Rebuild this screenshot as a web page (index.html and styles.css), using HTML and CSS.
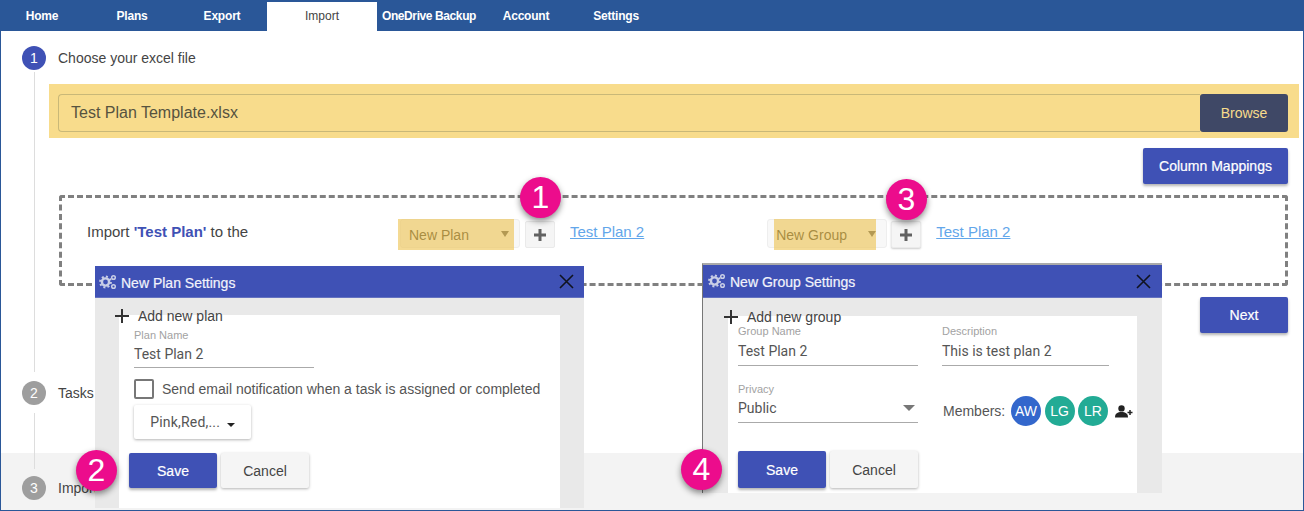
FILE: index.html
```html
<!DOCTYPE html>
<html lang="en">
<head>
	<meta charset="utf-8">
	<title>Import</title>
	<link rel="stylesheet" href="styles.css">
</head>
<body>
<div class="page">
	<nav class="nav">
		<a class="tab">Home</a>
		<a class="tab">Plans</a>
		<a class="tab">Export</a>
		<a class="tab tab-active">Import</a>
		<a class="tab tab-wide">OneDrive Backup</a>
		<a class="tab">Account</a>
		<a class="tab">Settings</a>
	</nav>

	<div class="step step-first">
		<span class="num num-on">1</span>
		<span class="step-title">Choose your excel file</span>
	</div>
	<div class="step-body">
		<div class="band">
			<div class="file-name">Test Plan Template.xlsx</div>
			<button class="btn-browse">Browse</button>
		</div>
		<div class="row-right row-mappings">
			<button class="btn btn-primary btn-mappings">Column Mappings</button>
		</div>
		<div class="dash-box">
			<div class="import-label">Import <b class="plan-name">'Test Plan'</b> to the</div>
			<div class="picker">
				<div class="select select-plan">
					<span>New Plan</span><i class="caret"></i>
					<i class="mark mark-plan"></i>
				</div>
				<button class="btn-plus"><svg width="14" height="14" viewBox="0 0 14 14"><path d="M7 1v12M1 7h12" stroke="#616161" stroke-width="3"/></svg></button>
				<a class="link">Test Plan 2</a>
			</div>
			<div class="picker picker-group">
				<div class="select select-group">
					<span>New Group</span><i class="caret"></i>
					<i class="mark mark-group"></i>
				</div>
				<button class="btn-plus btn-plus-group"><svg width="14" height="14" viewBox="0 0 14 14"><path d="M7 1v12M1 7h12" stroke="#616161" stroke-width="3"/></svg></button>
				<a class="link">Test Plan 2</a>
			</div>
		</div>
		<div class="row-right row-next">
			<button class="btn btn-primary btn-next">Next</button>
		</div>
	</div>

	<div class="step step-second">
		<span class="num">2</span>
		<span class="step-title">Tasks</span>
	</div>
	<div class="rail-short"></div>
	<div class="foot">
		<div class="rail-foot"></div>
		<div class="step step-third">
			<span class="num">3</span>
			<span class="step-title">Import</span>
		</div>
	</div>

	<section class="dialog dialog-plan">
		<header class="dialog-head">
			<svg class="gears" width="18" height="16" viewBox="0 0 18 16">
				<circle cx="6.5" cy="8" r="3.6" fill="none" stroke="#c9cee6" stroke-width="2.4"/>
				<circle cx="6.5" cy="8" r="5.4" fill="none" stroke="#c9cee6" stroke-width="2" stroke-dasharray="2 2.2"/>
				<circle cx="14.5" cy="3.5" r="1.8" fill="none" stroke="#c9cee6" stroke-width="1.5"/>
				<circle cx="14.5" cy="12.5" r="1.8" fill="none" stroke="#c9cee6" stroke-width="1.5"/>
			</svg>
			<span class="dialog-title">New Plan Settings</span>
			<svg class="close" width="15" height="15" viewBox="0 0 15 15"><path d="M1 1l13 13M14 1L1 14" stroke="#10131f" stroke-width="1.6"/></svg>
		</header>
		<div class="dialog-body">
			<div class="add-row add-row-plan">
				<svg width="14" height="14" viewBox="0 0 14 14"><path d="M7 0v14M0 7h14" stroke="#333" stroke-width="2"/></svg>
				<span>Add new plan</span>
			</div>
			<div class="panel panel-plan">
				<div class="label">Plan Name</div>
				<div class="value value-plan">Test Plan 2</div>
				<label class="check-row">
					<i class="check"></i>
					<span>Send email notification when a task is assigned or completed</span>
				</label>
				<button class="btn-colors">Pink,Red,... <i class="caret caret-dark"></i></button>
				<div class="actions actions-plan">
					<button class="btn btn-primary btn-save">Save</button>
					<button class="btn btn-cancel">Cancel</button>
				</div>
			</div>
		</div>
	</section>

	<section class="dialog dialog-group">
		<header class="dialog-head">
			<svg class="gears" width="18" height="16" viewBox="0 0 18 16">
				<circle cx="6.5" cy="8" r="3.6" fill="none" stroke="#c9cee6" stroke-width="2.4"/>
				<circle cx="6.5" cy="8" r="5.4" fill="none" stroke="#c9cee6" stroke-width="2" stroke-dasharray="2 2.2"/>
				<circle cx="14.5" cy="3.5" r="1.8" fill="none" stroke="#c9cee6" stroke-width="1.5"/>
				<circle cx="14.5" cy="12.5" r="1.8" fill="none" stroke="#c9cee6" stroke-width="1.5"/>
			</svg>
			<span class="dialog-title">New Group Settings</span>
			<svg class="close" width="15" height="15" viewBox="0 0 15 15"><path d="M1 1l13 13M14 1L1 14" stroke="#10131f" stroke-width="1.6"/></svg>
		</header>
		<div class="dialog-body">
			<div class="add-row add-row-group">
				<svg width="14" height="14" viewBox="0 0 14 14"><path d="M7 0v14M0 7h14" stroke="#333" stroke-width="2"/></svg>
				<span>Add new group</span>
			</div>
			<div class="panel panel-group">
				<div class="fields">
					<div>
						<div class="label">Group Name</div>
						<div class="value value-top">Test Plan 2</div>
					</div>
					<div>
						<div class="label">Description</div>
						<div class="value value-top value-desc">This is test plan 2</div>
					</div>
					<div class="field-privacy">
						<div class="label">Privacy</div>
						<div class="value value-select">Public<i class="caret caret-soft"></i></div>
					</div>
					<div class="members">
						<span class="members-label">Members:</span>
						<span class="avatar avatar-blue">AW</span>
						<span class="avatar">LG</span>
						<span class="avatar">LR</span>
						<svg class="add-person" width="18" height="13" viewBox="0 0 18 13">
							<circle cx="6.5" cy="3.4" r="3.2" fill="#222"/>
							<path d="M0 12.5c0-4 2.6-5.4 6.5-5.4s6.5 1.400 6.500 5.400z" fill="#222"/>
							<path d="M15 5v5M12.500 7.500h5" stroke="#222" stroke-width="1.500"/>
						</svg>
					</div>
				</div>
				<div class="actions actions-group">
					<button class="btn btn-primary btn-save">Save</button>
					<button class="btn btn-cancel">Cancel</button>
				</div>
			</div>
		</div>
	</section>

	<span class="badge badge-1">1</span>
	<span class="badge badge-2">2</span>
	<span class="badge badge-3">3</span>
	<span class="badge badge-4">4</span>
</div>
</body>
</html>
```

FILE: styles.css
```css
* { box-sizing: border-box; }
html, body { margin: 0; padding: 0; }
body { background: #fff; font-family: "Liberation Sans", Arial, sans-serif; color: #444; overflow: hidden; }
button { font-family: inherit; border: 0; cursor: pointer; padding: 0; }

.page { position: relative; display: flex; flex-direction: column; width: 1304px; height: 511px; border: 1px solid #2a5798; border-top: 0; overflow: hidden; }

/* top bar */
.nav { display: flex; flex: none; height: 31px; margin: 0 -1px; padding: 2px 0 0 0; background: #2a5798; }
.tab { display: block; width: 90px; height: 29px; font-size: 12px; font-weight: bold; letter-spacing: -.2px; line-height: 28px; text-align: center; color: #fff; }
.tab:first-child { width: 87px; padding-right: 3px; }
.tab-active { width: 110px; background: #fff; color: #444; font-weight: normal; letter-spacing: 0; }
.tab-wide { width: 104px; letter-spacing: -.4px; }

/* steps */
.step { display: flex; flex: none; align-items: center; height: 24px; margin-left: 21px; }
.step-first { margin-top: 15px; }
.step-second { margin-top: 9px; }
.step-third { margin-top: 7px; }
.num { display: flex; align-items: center; justify-content: center; width: 24px; height: 24px; border-radius: 50%; background: #9e9e9e; color: #fff; font-size: 14px; }
.num-on { background: #3f51b5; }
.step-title { margin-left: 12px; font-size: 14px; color: #444; }

.step-body { flex: none; height: 300px; margin: 2px 0 0 33px; padding-top: 12px; padding-left: 14px; border-left: 1px solid #ddd; }
.rail-short { flex: none; width: 1px; height: 40px; margin: 8px 0 0 33px; background: #ddd; }
.foot { flex: 1; background: #f3f3f3; }
.rail-foot { width: 1px; height: 16px; margin-left: 33px; background: #ddd; }

.band { display: flex; width: 1250px; height: 54px; padding: 10px 11px 6px 9px; background: #f8dc8c; }
.file-name { flex: 1; height: 38px; padding-left: 12px; border: 1px solid #c9b878; border-right: 0; border-radius: 4px 0 0 4px; font-size: 16px; line-height: 36px; color: #56533f; }
.btn-browse { width: 88px; height: 38px; background: #3f4866; border-radius: 3px; font-size: 14px; color: #f8dc8c; }

.btn { height: 36px; border-radius: 2px; font-size: 14px; }
.btn-primary { background: #3f51b5; color: #fff; box-shadow: 0 2px 3px rgba(0,0,0,.3); -webkit-text-stroke: .2px #fff; }
.row-right { display: flex; justify-content: flex-end; width: 1239px; }
.row-mappings { margin-top: 10px; }
.btn-mappings { width: 145px; }
.row-next { margin-top: 11px; }
.btn-next { width: 88px; }

.dash-box { display: flex; align-items: flex-start; width: 1229px; height: 91px; margin: 11px 0 0 10px; padding: 21px 0 0 25px; border: 3px dashed #808080; border-radius: 3px; }
.import-label { width: 313px; padding-top: 5px; font-size: 15px; line-height: 16px; color: #444; }
.plan-name { color: #3f51b5; }
.picker { display: flex; align-items: flex-start; }
.picker-group { margin-left: 123px; }
.select { position: relative; display: flex; align-items: center; justify-content: space-between; width: 120px; height: 29px; padding: 3px 9px 0 8px; background: #f8f8f8; border: 1px solid #eee; border-radius: 3px; font-size: 14px; color: #38352a; }
.select-group { padding: 3px 10px 0 8px; }
.caret { display: inline-block; width: 0; height: 0; border-left: 4px solid transparent; border-right: 4px solid transparent; border-top: 6px solid #555; }
.select-plan .caret { margin-right: 1px; margin-top: -3px; }
.select-group .caret { margin-top: -3px; }
.mark { position: absolute; top: -1px; bottom: -3px; background: rgba(238,196,82,.62); }
.mark-plan { left: -3px; right: 5px; }
.mark-group { left: 6px; right: 10px; }
.btn-plus { display: flex; align-items: center; justify-content: center; width: 30px; height: 27px; margin: 2px 0 0 5px; background: #f5f5f5; border: 1px solid #eaeaea; border-radius: 2px; }
.btn-plus-group { margin-left: 4px; box-shadow: 0 1px 2px rgba(0,0,0,.2); }
.link { margin: 4px 0 0 15px; font-size: 15px; line-height: 17px; color: #62a6ea; text-decoration: underline; }

/* the two settings windows */
.dialog { position: absolute; background: #e9e9e9; }
.dialog-plan { left: 94px; top: 266px; width: 489px; height: 242px; }
.dialog-group { left: 701px; top: 263px; width: 460px; height: 230px; border-top: 2px solid #aaa; border-left: 1px solid #777; }
.dialog-head { display: flex; align-items: center; height: 32px; padding: 0 10px 0 4px; background: #3f51b5; border-bottom: 1px solid #6472c0; color: #fff; }
.dialog-group .dialog-head { height: 33px; padding: 0 11px 0 5px; }
.dialog-title { flex: 1; margin-left: 4px; padding-top: 2px; font-size: 14px; color: #f2f3fb; -webkit-text-stroke: .2px #f2f3fb; }
.dialog-body { padding: 0 24px; }
.dialog-group .dialog-body { padding: 0 25px; }
.add-row { position: relative; display: flex; align-items: center; height: 16px; font-size: 14px; color: #444; }
.add-row span { margin-left: 9px; }
.add-row-plan { margin: 10px 0 -9px -4px; }
.add-row-group { margin: 11px 0 -9px -4px; }
.panel { background: #fff; padding-left: 15px; }
.panel-plan { height: 193px; padding-top: 14px; }
.panel-group { height: 177px; padding: 9px 0 0 10px; }

.label { height: 12px; font-size: 11px; line-height: 12px; color: #a2a2a2; }
.value { width: 180px; height: 28px; margin-top: 1px; border-bottom: 1px solid #aaa; font-family: Roboto, "Liberation Sans", sans-serif; font-size: 14px; line-height: 24px; color: #555; }
.value-top { line-height: 26px; }
.value-plan { height: 26px; }
.value-desc { width: 167px; }
.value-select { display: flex; align-items: center; justify-content: space-between; height: 27px; padding: 0 3px 2px 0; }
.caret-soft { border-top-color: #777; border-left-width: 6px; border-right-width: 6px; }

.check-row { display: flex; align-items: center; height: 20px; margin-top: 11px; font-size: 14px; color: #555; }
.check { width: 20px; height: 20px; border: 2px solid #777; border-radius: 2px; margin-right: 8px; }
.btn-colors { display: block; width: 117px; height: 34px; margin-top: 6px; background: #fff; border-radius: 2px; box-shadow: 0 1px 3px rgba(0,0,0,.3); font-family: Roboto, "Liberation Sans", sans-serif; font-size: 14px; letter-spacing: .2px; color: #555; }
.caret-dark { margin-left: 3px; border-top-color: #222; border-top-width: 4px; }
.actions { display: flex; gap: 4px; }
.actions-plan { margin: 14px 0 0 -5px; }
.actions-group { margin-top: 25px; }
.actions-plan .btn { width: 88px; height: 35px; }
.actions-group .btn { width: 88px; height: 37px; }
.btn-cancel { background: #f5f5f5; color: #444; box-shadow: 0 1px 3px rgba(0,0,0,.3); }

.fields { display: grid; grid-template-columns: 180px 167px; column-gap: 24px; }
.field-privacy { margin-top: 17px; }
.members { display: flex; align-items: center; height: 30px; margin: 30px 0 0 1px; font-size: 14px; color: #555; white-space: nowrap; }
.members-label { width: 65px; flex: none; margin-right: 3px; }
.avatar { display: flex; flex: none; align-items: center; justify-content: center; width: 30px; height: 30px; margin-right: 3.5px; border-radius: 50%; background: #22ab95; color: #fff; font-size: 14px; }
.avatar-blue { background: #3367cc; }
.add-person { flex: none; margin-left: 3px; }

/* step markers from the screenshot */
.badge { position: absolute; display: flex; align-items: center; justify-content: center; width: 41px; height: 41px; border-radius: 50%; background: #ec0c8c; color: #fff; font-size: 32px; box-shadow: 0 3px 6px rgba(0,0,0,.45); }
.badge-1 { left: 519px; top: 177px; }
.badge-2 { left: 75px; top: 450px; }
.badge-3 { left: 885px; top: 179px; }
.badge-4 { left: 680px; top: 449px; }
```
